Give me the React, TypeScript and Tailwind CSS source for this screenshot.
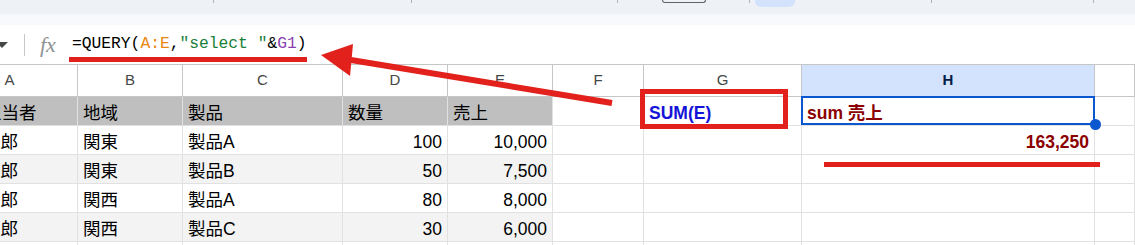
import React from "react";

const SANS = '"Liberation Sans", Arial, "Noto Sans CJK JP", sans-serif';

type CellProps = {
  text?: string;
  right?: boolean;
  className?: string;
  children?: React.ReactNode;
};

function Cell({ text, right, className = "", children }: CellProps) {
  return (
    <div
      className={`relative h-[29px] border-r border-b border-[#e1e1e1] flex items-start pt-[6px] leading-[20px] text-[17.5px] whitespace-nowrap overflow-visible ${
        right ? "justify-end" : "justify-start"
      } ${className}`}
    >
      {text}
      {children}
    </div>
  );
}

const cols = ["A", "B", "C", "D", "E", "F", "G", "H", ""];

const rows: { a: string; b: string; c: string; d: string; e: string }[] = [
  { a: "太郎", b: "関東", c: "製品A", d: "100", e: "10,000" },
  { a: "太郎", b: "関東", c: "製品B", d: "50", e: "7,500" },
  { a: "太郎", b: "関西", c: "製品A", d: "80", e: "8,000" },
  { a: "太郎", b: "関西", c: "製品C", d: "30", e: "6,000" },
];

function Sep() {
  return <div className="w-px h-[3px] bg-[#b0b4b9] shrink-0" />;
}

export default function App() {
  return (
    <div
      className="relative w-[1135px] h-[245px] overflow-hidden bg-white"
      style={{ fontFamily: SANS }}
    >
      {/* toolbar strip */}
      <div className="flex h-[14px] bg-[#eef1f6] items-start">
        <div className="w-[213px] shrink-0" />
        <Sep />
        <div className="w-[197px] shrink-0" />
        <Sep />
        <div className="w-[205px] shrink-0" />
        <Sep />
        <div className="w-[44px] shrink-0" />
        <div className="w-[44px] h-[3px] border border-t-0 border-[#5f6368] rounded-b-[5px] shrink-0" />
        <div className="w-[43px] shrink-0" />
        <Sep />
        <div className="w-[5px] shrink-0" />
        <div className="w-[40px] h-[7px] bg-[#d3e3fd] rounded-b-[6px] shrink-0" />
        <div className="w-[136px] shrink-0" />
        <Sep />
        <div className="w-[161px] shrink-0" />
        <Sep />
      </div>
      <div className="h-[11px] bg-[#f7f9fc]" />

      {/* formula bar */}
      <div className="flex items-center h-[39px] bg-white">
        <svg width="8" height="6" viewBox="0 0 8 6" className="shrink-0">
          <polygon points="-4,0 8,0 2,6" fill="#444746" />
        </svg>
        <div className="w-[16px] shrink-0" />
        <div className="w-px h-[22px] bg-[#c7c7c7] shrink-0" />
        <div className="w-[15px] shrink-0" />
        <div
          className="italic text-[22px] leading-none text-[#8e9194] w-[32px] shrink-0"
          style={{ fontFamily: '"Liberation Serif", "DejaVu Serif", serif' }}
        >
          fx
        </div>
        <div
          className="text-[16.3px] text-black whitespace-pre leading-none"
          style={{ fontFamily: '"Liberation Mono", "DejaVu Sans Mono", monospace' }}
        >
          =QUERY(<span className="text-[#e8870e]">A:E</span>,
          <span className="text-[#188038]">"select "</span>&amp;
          <span className="text-[#8a3fb0]">G1</span>)
        </div>
      </div>

      {/* grid */}
      <div className="ml-[-58px] grid grid-cols-[136px_105px_160px_105px_105px_91px_158px_293px_1fr]">
        {cols.map((c, i) => (
          <div
            key={"h" + i}
            className={`h-[33px] border-t border-b border-r border-[#c4c7c5] flex items-center justify-center text-[15px] ${
              c === "H"
                ? "bg-[#d3e3fd] text-[#041e49] font-bold"
                : "bg-white text-[#444746]"
            }`}
            style={{ fontFamily: '"Liberation Sans", Arial, sans-serif' }}
          >
            {c}
          </div>
        ))}

        {/* row 1 */}
        <Cell text="担当者" className="bg-[#bfbfbf] text-black pl-[42px]" />
        <Cell text="地域" className="bg-[#bfbfbf] text-black px-[5px]" />
        <Cell text="製品" className="bg-[#bfbfbf] text-black px-[5px]" />
        <Cell text="数量" className="bg-[#bfbfbf] text-black px-[5px]" />
        <Cell text="売上" className="bg-[#bfbfbf] text-black px-[5px]" />
        <Cell />
        <Cell className="font-bold text-[#1414d8] px-[5px]" text="SUM(E)" />
        <Cell className="font-bold text-[#8b0000] px-[5px]" text="sum 売上">
          <div className="absolute left-[-1px] top-[-1px] right-[-1px] bottom-[0px] border-2 border-[#0b57d0] pointer-events-none" />
          <div className="absolute right-[-7px] bottom-[-5px] w-[11px] h-[11px] rounded-full bg-[#0b57d0] z-10" />
        </Cell>
        <Cell />

        {rows.map((r, i) => {
          const bg = i % 2 === 1 ? "bg-[#f3f3f3]" : "bg-white";
          return (
            <React.Fragment key={"r" + i}>
              <Cell text={r.a} className={`${bg} text-black pl-[41px]`} />
              <Cell text={r.b} className={`${bg} text-black px-[5px]`} />
              <Cell text={r.c} className={`${bg} text-black px-[5px]`} />
              <Cell text={r.d} right className={`${bg} text-black px-[5px]`} />
              <Cell text={r.e} right className={`${bg} text-black px-[5px]`} />
              <Cell />
              <Cell />
              {i === 0 ? (
                <Cell text="163,250" right className="font-bold text-[#8b0000] px-[5px]" />
              ) : (
                <Cell />
              )}
              <Cell />
            </React.Fragment>
          );
        })}
        {Array.from({ length: 9 }).map((_, i) => (
          <Cell key={"x" + i} className="bg-white" />
        ))}
      </div>

      {/* annotations */}
      <svg
        className="absolute left-0 top-0 pointer-events-none"
        width="1135"
        height="245"
        viewBox="0 0 1135 245"
      >
        <rect x="69" y="57" width="238" height="5" fill="#e3211c" />
        <line x1="612" y1="103" x2="345" y2="59" stroke="#e3211c" strokeWidth="6" />
        <polygon points="321,55 353,44 350,76" fill="#e3211c" />
        <rect x="642.5" y="91.5" width="143" height="35" fill="none" stroke="#e3211c" strokeWidth="5" />
        <rect x="824" y="162" width="276" height="5" fill="#e3211c" />
      </svg>
    </div>
  );
}
